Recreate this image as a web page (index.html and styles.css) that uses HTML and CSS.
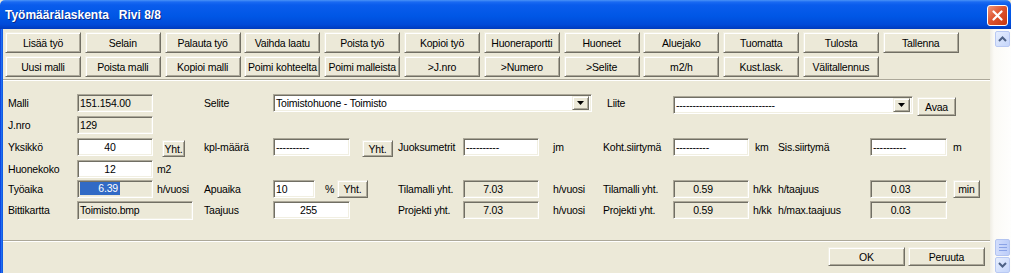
FILE: index.html
```html
<!DOCTYPE html>
<html>
<head>
    <meta charset="UTF-8">
    <title>Työmäärälaskenta</title>
    <link rel="stylesheet" href="styles.css">
</head>
<body>
<div class="ikkuna">
    <div class="otsikko">
        <span class="otsikko-teksti">Työmäärälaskenta   Rivi 8/8</span>
        <span class="sulje">
            <svg width="11" height="11" viewBox="0 0 11 11"><path d="M1.5 1.5L9.5 9.5M9.5 1.5L1.5 9.5" stroke="#fff" stroke-width="2.2" stroke-linecap="round"/></svg>
        </span>
    </div>
    <div class="runko">
        <div class="reuna"></div>
        <div class="dialogi">
            <div class="painikkeet">
                <button>Lisää työ</button>
                <button>Selain</button>
                <button>Palauta työ</button>
                <button>Vaihda laatu</button>
                <button>Poista työ</button>
                <button>Kopioi työ</button>
                <button>Huoneraportti</button>
                <button>Huoneet</button>
                <button>Aluejako</button>
                <button>Tuomatta</button>
                <button>Tulosta</button>
                <button>Tallenna</button>
                <button>Uusi malli</button>
                <button>Poista malli</button>
                <button>Kopioi malli</button>
                <button>Poimi kohteelta</button>
                <button>Poimi malleista</button>
                <button>&gt;J.nro</button>
                <button>&gt;Numero</button>
                <button>&gt;Selite</button>
                <button>m2/h</button>
                <button>Kust.lask.</button>
                <button>Välitallennus</button>
            </div>
            <div class="erotin"></div>

            <div class="lomake">
                <!-- rivi 1 -->
                <div class="lbl eka">Malli</div>
                <div class="fld">151.154.00</div>
                <div class="lbl sarake4">Selite</div>
                <div class="combo selite">
                    <span>Toimistohuone - Toimisto</span>
                    <span class="nuoli"><svg width="7" height="4"><path d="M0 0h7L3.5 4z"/></svg></span>
                </div>
                <div class="lbl liite">Liite</div>
                <div class="liite-rivi">
                    <div class="combo liite-combo">
                        <span>------------------------------</span>
                        <span class="nuoli"><svg width="7" height="4"><path d="M0 0h7L3.5 4z"/></svg></span>
                    </div>
                    <button class="avaa">Avaa</button>
                </div>

                <!-- rivi 2 -->
                <div class="lbl eka">J.nro</div>
                <div class="fld">129</div>

                <!-- rivi 3 -->
                <div class="lbl eka">Yksikkö</div>
                <div class="fld white c">40</div>
                <div><button class="yht">Yht.</button></div>
                <div class="lbl">kpl-määrä</div>
                <div class="yhdessa">
                    <div class="fld white w77">----------</div>
                    <button class="yht yht2">Yht.</button>
                </div>
                <div class="lbl">Juoksumetrit</div>
                <div class="fld white">----------</div>
                <div class="lbl yks">jm</div>
                <div class="lbl">Koht.siirtymä</div>
                <div class="fld white">----------</div>
                <div class="lbl yks2">km</div>
                <div class="lbl">Sis.siirtymä</div>
                <div class="fld white w77">----------</div>
                <div class="lbl yks2">m</div>

                <!-- rivi 4 -->
                <div class="lbl eka">Huonekoko</div>
                <div class="fld white c">12</div>
                <div class="lbl yks3">m2</div>

                <!-- rivi 5 -->
                <div class="lbl eka">Työaika</div>
                <div class="fld"><span class="valittu">6.39</span></div>
                <div class="lbl yks3">h/vuosi</div>
                <div class="lbl">Apuaika</div>
                <div class="yhdessa">
                    <div class="fld white w42">10</div>
                    <span class="pros">%</span>
                    <button class="yht yht3">Yht.</button>
                </div>
                <div class="lbl">Tilamalli yht.</div>
                <div class="fld c2">7.03</div>
                <div class="lbl yks">h/vuosi</div>
                <div class="lbl">Tilamalli yht.</div>
                <div class="fld c2">0.59</div>
                <div class="lbl yks3">h/kk</div>
                <div class="lbl">h/taajuus</div>
                <div class="fld c2 w77">0.03</div>
                <div><button class="min">min</button></div>

                <!-- rivi 6 -->
                <div class="lbl eka">Bittikartta</div>
                <div class="fld bitti">Toimisto.bmp</div>
                <div class="lbl">Taajuus</div>
                <div class="fld white w77 c3">255</div>
                <div class="lbl">Projekti yht.</div>
                <div class="fld c2">7.03</div>
                <div class="lbl yks">h/vuosi</div>
                <div class="lbl">Projekti yht.</div>
                <div class="fld c2">0.59</div>
                <div class="lbl yks3">h/kk</div>
                <div class="lbl">h/max.taajuus</div>
                <div class="fld c2 w77">0.03</div>
            </div>

            <div class="erotin ala"></div>
            <div class="ok-rivi">
                <button>OK</button>
                <button>Peruuta</button>
            </div>
        </div>
        <div class="vieritys">
            <span class="vnappi ylos"><svg width="9" height="6"><path d="M1 5L4.5 1.5L8 5" stroke="#4d6185" stroke-width="2" fill="none"/></svg></span>
            <span class="tyhja"></span>
            <span class="peukalo"></span>
            <span class="vnappi"><svg width="9" height="6"><path d="M1 1L4.5 4.5L8 1" stroke="#4d6185" stroke-width="2" fill="none"/></svg></span>
        </div>
    </div>
</div>
</body>
</html>
```

FILE: styles.css
```css
:root {
    --pinta: #ece9d8;
    --varjo: #aca899;
    --tumma: #716f64;
    --vaalea: #f1efe2;
}

body {
    margin: 0;
    width: 1011px;
    height: 273px;
    overflow: hidden;
    background: var(--pinta);
    font-family: "Liberation Sans", Arial, sans-serif;
    font-size: 10.5px;
    letter-spacing: -0.2px;
    color: #000;
}

.ikkuna {
    display: flex;
    flex-direction: column;
    height: 273px;
}

/* otsikkopalkki */
.otsikko {
    height: 29px;
    flex: none;
    display: flex;
    align-items: center;
    justify-content: space-between;
    padding: 0 3px 0 5px;
    border-radius: 5px 5px 0 0;
    background: linear-gradient(#4a93f7 0, #1a6af2 2px, #0a5cec 5px, #0057e6 55%, #004ad8 85%, #003bbd 100%);
}

.otsikko-teksti {
    color: #fff;
    font-weight: bold;
    font-size: 12px;
    letter-spacing: 0;
    white-space: pre;
    text-shadow: 1px 1px #0b2a8a;
}

.sulje {
    width: 21px;
    height: 21px;
    margin-top: 1px;
    box-sizing: border-box;
    border: 1px solid #fff;
    border-radius: 3px;
    display: flex;
    align-items: center;
    justify-content: center;
    background: linear-gradient(135deg, #f0967a, #de5530 45%, #c8370f);
}

.runko {
    flex: 1;
    display: flex;
    min-height: 0;
}

.reuna {
    width: 3px;
    background: linear-gradient(to right, #0831d9, #1f6ff0, #0b52dc);
}

.dialogi {
    flex: 1;
    display: flex;
    flex-direction: column;
}

/* painikkeet */
button {
    font: inherit;
    letter-spacing: inherit;
    color: #000;
    height: 21px;
    padding: 0;
    background: var(--pinta);
    border: 1px solid;
    border-color: var(--vaalea) var(--tumma) var(--tumma) var(--vaalea);
    box-shadow: inset 1px 1px #fff, inset -1px -1px var(--varjo);
    white-space: nowrap;
}

.painikkeet {
    display: grid;
    grid-template-columns: repeat(12, 76px);
    column-gap: 3.8px;
    row-gap: 3px;
    padding: 3px 0 0 2px;
}

.erotin {
    border-top: 1px solid var(--varjo);
    border-bottom: 1px solid #fff;
    margin-top: 2px;
}

.erotin.ala {
    margin-top: 18px;
}

/* lomake */
.lomake {
    display: grid;
    grid-template-columns: 69px 76px 51px 69px 125px 65px 76px 64px 70px 76px 29px 92px 77px 1fr;
    grid-template-rows: 22px 22px 22px 20px 21px 21px;
    align-items: start;
    padding-left: 5px;
    margin-top: 13px;
}

.lbl {
    line-height: 18px;
    white-space: nowrap;
}

.eka {
    grid-column: 1;
}

.sarake4 {
    grid-column: 4;
}

.liite {
    padding-left: 4px;
}

.yks {
    padding-left: 14px;
}

.yks2 {
    padding-left: 6px;
}

.yks3 {
    padding-left: 4px;
}

.fld {
    width: 76px;
    height: 18px;
    box-sizing: border-box;
    border: 1px solid;
    border-color: var(--varjo) #fff #fff var(--varjo);
    box-shadow: inset 1px 1px var(--tumma), inset -1px -1px var(--vaalea);
    padding: 0 1px 0 2px;
    line-height: 16px;
    white-space: nowrap;
    overflow: hidden;
}

.fld.white {
    background: #fff;
}

.fld.c {
    text-align: center;
    padding-right: 12px;
}

.fld.c2 {
    text-align: center;
    padding-right: 18px;
}

.fld.c3 {
    text-align: center;
    padding-right: 8px;
}

.w77 {
    width: 77px;
}

.w42 {
    width: 42px;
}

.bitti {
    grid-column: span 2;
    width: 116px;
    height: 19px;
    line-height: 17px;
}

.valittu {
    display: inline-block;
    width: 40px;
    margin-top: 1px;
    padding-right: 2px;
    box-sizing: border-box;
    line-height: 13px;
    text-align: right;
    background: #316ac5;
    color: #fff;
    vertical-align: top;
}

.yhdessa {
    display: flex;
    align-items: flex-start;
}

.yht {
    width: 23px;
    height: 17px;
    margin: 2px 0 0 9px;
}

.yht2 {
    width: 31px;
    margin-left: 12px;
}

.yht3 {
    width: 31px;
    height: 18px;
    margin: 0 0 0 3px;
}

.pros {
    width: 9px;
    margin-left: 10px;
    line-height: 18px;
}

.min {
    width: 27px;
    height: 18px;
    margin-left: 6px;
}

/* yhdistelmäruudut */
.combo {
    display: flex;
    justify-content: space-between;
    align-items: flex-start;
    height: 18px;
    box-sizing: border-box;
    border: 1px solid;
    border-color: var(--varjo) #fff #fff var(--varjo);
    box-shadow: inset 1px 1px var(--tumma), inset -1px -1px var(--vaalea);
    background: #fff;
    padding-left: 2px;
    line-height: 16px;
}

.selite {
    grid-column: 5 / span 4;
    width: 319px;
}

.nuoli {
    width: 17px;
    height: 14px;
    margin: 1px 2px 0 0;
    box-sizing: border-box;
    display: flex;
    align-items: center;
    justify-content: center;
    background: var(--pinta);
    border: 1px solid;
    border-color: var(--vaalea) var(--tumma) var(--tumma) var(--vaalea);
    box-shadow: inset 1px 1px #fff, inset -1px -1px var(--varjo);
}

.liite-rivi {
    grid-column: 10 / span 5;
    display: flex;
    align-items: flex-start;
    gap: 4px;
}

.liite-combo {
    width: 240px;
    margin-top: 2px;
}

.avaa {
    width: 39px;
    height: 19px;
    margin-top: 3px;
}

/* alaosa */
.ok-rivi {
    display: flex;
    justify-content: flex-end;
    gap: 3px;
    padding: 5px 5px 0 0;
}

.ok-rivi button {
    width: 77px;
    height: 19px;
}

/* vierityspalkki */
.vieritys {
    width: 21px;
    display: flex;
    flex-direction: column;
    align-items: flex-end;
    padding-right: 1px;
    box-sizing: border-box;
    background: linear-gradient(to right, #efede4, #fbfaf6 4px, #fefefd);
}

.vnappi {
    width: 15px;
    height: 16px;
    flex: none;
    box-sizing: border-box;
    display: flex;
    align-items: center;
    justify-content: center;
    border: 1px solid #b9c9f3;
    border-radius: 2px;
    background: linear-gradient(135deg, #e6eefe, #c6d6fb);
}

.ylos {
    margin-top: 2px;
}

.tyhja {
    flex: 1;
}

.peukalo {
    width: 15px;
    height: 17px;
    margin-bottom: 1px;
    box-sizing: border-box;
    border: 1px solid #b3c4f0;
    border-radius: 2px;
    background:
        repeating-linear-gradient(#8aa3e6 0 1px, transparent 1px 3px) 3px 4px / 8px 8px no-repeat,
        linear-gradient(to right, #d2ddfc, #bccdf9);
}
```
